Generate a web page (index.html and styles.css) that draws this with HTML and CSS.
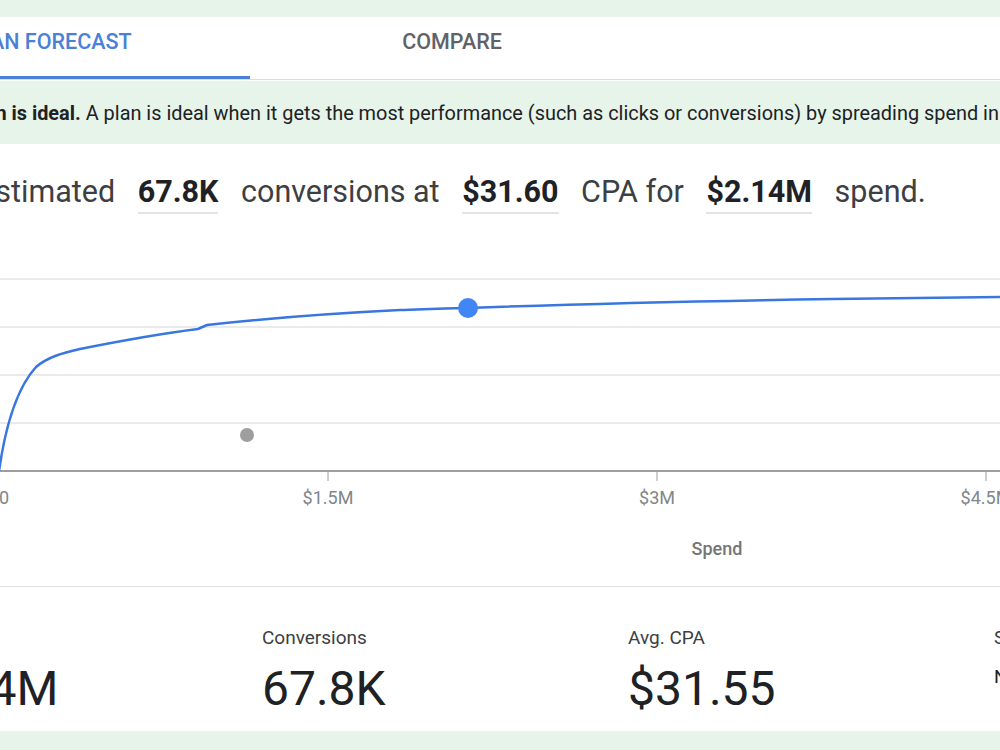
FILE: index.html
```html
<!DOCTYPE html>
<html lang="en">
<head>
    <meta charset="UTF-8">
    <meta name="viewport" content="width=device-width, initial-scale=1.0">
    <title>Plan forecast</title>
    <link rel="stylesheet" href="styles.css">
</head>
<body>
<div class="page">
    <div class="card">
        <div class="tabs">
            <div class="tab active">PLAN FORECAST</div>
            <div class="tab">COMPARE</div>
        </div>

        <div class="notice">
            <b>Your plan is ideal.</b> A plan is ideal when it gets the most performance (such as clicks or conversions) by spreading spend in the most efficient way.
        </div>

        <p class="summary">
            Estimated <span class="metric">67.8K</span> conversions at <span class="metric">$31.60</span> CPA for <span class="metric">$2.14M</span> spend.
        </p>

        <svg class="chart" width="1400" height="357">
            <g transform="translate(154 -230)">
                <!-- grid -->
                <g class="grid">
                    <line x1="-1" y1="280" x2="1200" y2="280"/>
                    <line x1="-1" y1="328" x2="1200" y2="328"/>
                    <line x1="-1" y1="376" x2="1200" y2="376"/>
                    <line x1="-1" y1="424" x2="1200" y2="424"/>
                </g>
                <line class="axis" x1="-154" y1="472" x2="1200" y2="472"/>
                <g class="ticks">
                    <line x1="328" y1="472" x2="328" y2="482"/>
                    <line x1="657" y1="472" x2="657" y2="482"/>
                    <line x1="986" y1="472" x2="986" y2="482"/>
                </g>
                <g class="tick-labels">
                    <text x="-1" y="505">$0</text>
                    <text x="328" y="505">$1.5M</text>
                    <text x="657" y="505">$3M</text>
                    <text x="986" y="505">$4.5M</text>
                </g>
                <text class="axis-title" x="717" y="556">Spend</text>

                <!-- forecast curve -->
                <path class="curve" d="M -1 472 C 5 430, 16 390, 36 368 C 48 358, 62 354, 80 350 C 110 344, 150 336, 198 330 L 207 326 C 260 320, 340 314, 400 311 C 430 310, 450 309, 468 309 C 550 306, 700 302, 833 300 L 1000 298 L 1200 296"/>
                <circle class="current" cx="247" cy="436" r="7"/>
                <circle class="selected" cx="468" cy="309" r="10"/>
            </g>
        </svg>

        <div class="stats">
            <div class="stat">
                <div class="stat-label">Spend</div>
                <div class="stat-value">$2.14M</div>
            </div>
            <div class="stat">
                <div class="stat-label">Conversions</div>
                <div class="stat-value">67.8K</div>
            </div>
            <div class="stat">
                <div class="stat-label">Avg. CPA</div>
                <div class="stat-value">$31.55</div>
            </div>
            <div class="stat">
                <div class="stat-label">Search impr. share</div>
                <div class="stat-note">Not enough data</div>
            </div>
        </div>
    </div>
</div>
</body>
</html>
```

FILE: styles.css
```css
body { margin: 0; background: #e6f4ea; font-family: Roboto, "Liberation Sans", sans-serif; overflow: hidden; }
.page { margin-left: -154px; width: 1400px; padding-top: 17px; }
.card { background: #fff; }

.tabs { display: flex; border-bottom: 1px solid #dadce0; }
.tab {
    width: 404px;
    height: 62px;
    box-sizing: border-box;
    padding-top: 13px;
    text-align: center;
    font-size: 21.5px;
    font-weight: 500;
    line-height: 24px;
    color: #5f6368;
}
.tab.active { color: #4a80d6; border-bottom: 3px solid #4a80d6; }

.notice {
    margin-top: 1px;
    height: 61px;
    padding: 2px 0 0 76px;
    line-height: 61px;
    background: #e6f4ea;
    font-size: 19.9px;
    color: #202124;
    white-space: nowrap;
}
.notice b { font-weight: 700; }

.summary {
    margin: 0;
    padding: 28px 0 17px 132px;
    font-size: 30.5px;
    line-height: 40px;
    color: #3c4043;
    white-space: nowrap;
}
.metric {
    margin: 0 15px;
    padding-bottom: 3px;
    font-weight: 700;
    color: #202124;
    border-bottom: 2px solid #e3e3e3;
}

.chart { display: block; border-bottom: 1px solid #e0e0e0; }
.grid line { stroke: #e3e3e3; stroke-width: 1.5; }
.axis { stroke: #9e9e9e; stroke-width: 2; }
.ticks line { stroke: #9e9e9e; stroke-width: 1; }
.tick-labels text { font-size: 18px; fill: #80868b; text-anchor: middle; }
.axis-title { font-size: 18px; font-weight: 500; fill: #757575; text-anchor: middle; }
.curve { fill: none; stroke: #3a76e0; stroke-width: 2.5; stroke-linejoin: round; }
.current { fill: #9e9e9e; }
.selected { fill: #4285f4; }

.stats {
    display: grid;
    grid-template-columns: repeat(4, 366px);
    padding: 39px 0 14px 50px;
}
.stat-label { font-size: 19px; line-height: 24px; color: #3c4043; white-space: nowrap; }
.stat-value { margin-top: 11px; font-size: 48px; line-height: 56px; color: #202124; white-space: nowrap; }
.stat-note { margin-top: 11px; font-size: 19px; line-height: 32px; color: #202124; white-space: nowrap; }
```
